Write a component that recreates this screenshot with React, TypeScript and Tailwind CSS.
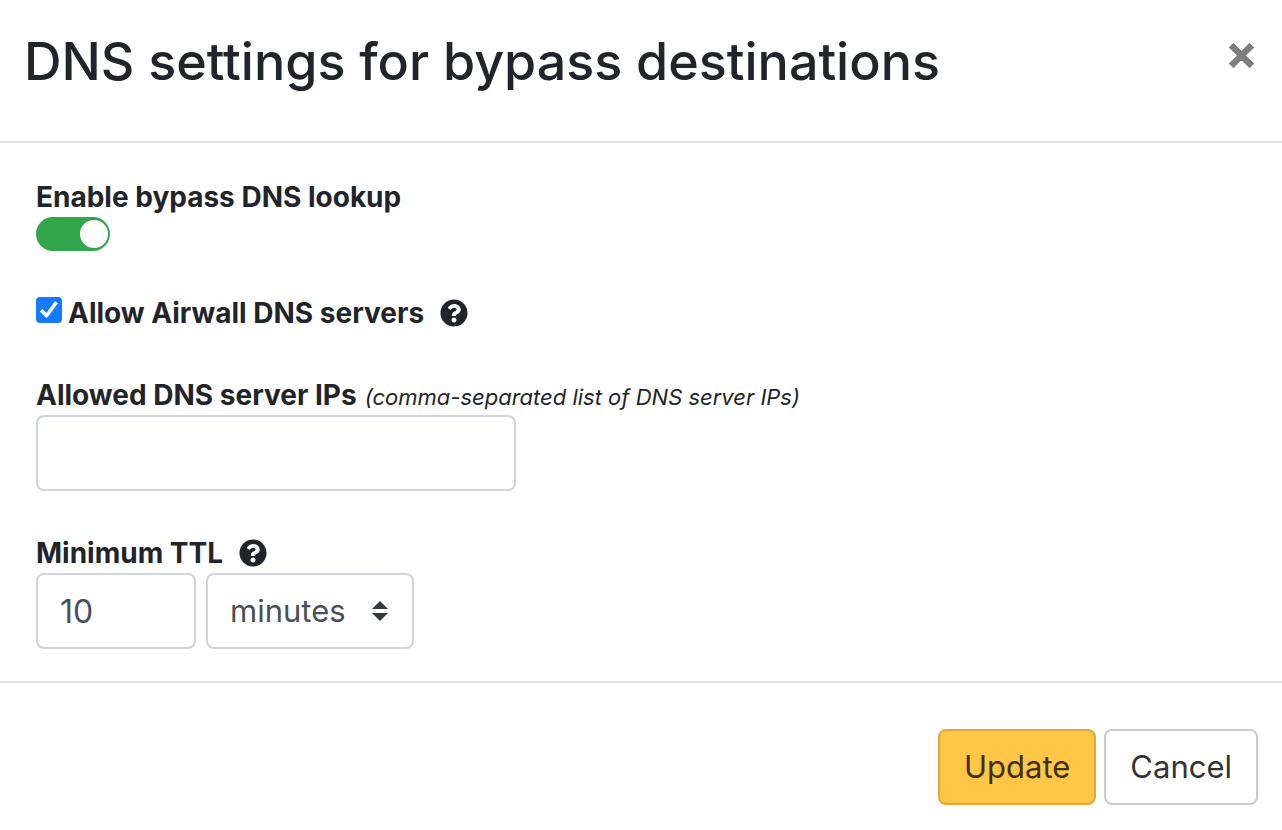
import { useState } from "react";
import { FaQuestionCircle } from "react-icons/fa";

function HelpButton({ label }: { label: string }) {
  return (
    <button type="button" aria-label={label} className="flex text-[#212529]">
      <FaQuestionCircle className="size-7" />
    </button>
  );
}

export default function App() {
  const [enabled, setEnabled] = useState(true);
  const [airwall, setAirwall] = useState(true);
  const [ips, setIps] = useState("");
  const [ttl, setTtl] = useState("10");
  const [unit, setUnit] = useState("minutes");

  return (
    <main className="min-h-screen bg-white font-['Inter',sans-serif] text-[#212529]">
      <header className="flex items-start justify-between border-b-2 border-[#dee2e6] pt-7 pr-7 pb-[45px] pl-6">
        <h1 className="text-[52px] leading-[68px] font-medium">DNS settings for bypass destinations</h1>
        <button type="button" aria-label="Close" className="mt-[15px] flex text-[#7f7f7f]">
          <svg viewBox="0 0 24 24" className="size-[25px]" fill="currentColor" stroke="currentColor" strokeWidth="1" strokeLinejoin="round" aria-hidden="true">
            <path d="M4.3 .5 L12 8.2 L19.7 .5 L23.5 4.3 L15.8 12 L23.5 19.7 L19.7 23.5 L12 15.8 L4.3 23.5 L.5 19.7 L8.2 12 L.5 4.3 Z" />
          </svg>
        </button>
      </header>

      <form onSubmit={(e) => e.preventDefault()}>
        <div className="flex flex-col items-start border-b-2 border-[#dee2e6] px-9 pt-9 pb-8">
          <label htmlFor="enable" className="pb-[2px] text-[28px] leading-[36px] font-bold">
            Enable bypass DNS lookup
          </label>
          <input
            id="enable"
            type="checkbox"
            role="switch"
            checked={enabled}
            onChange={(e) => setEnabled(e.target.checked)}
            className="h-[34px] w-[74px] appearance-none rounded-full bg-[#adb5bd] px-[2px] py-[3px] before:block before:size-7 before:rounded-full before:bg-white checked:bg-[#31a64b] checked:before:ml-auto"
          />

          <div className="mt-11 flex items-center pb-[2px]">
            <span className="mt-[2px] mr-[6px] grid size-[26px] self-start">
              <input
                id="airwall"
                type="checkbox"
                checked={airwall}
                onChange={(e) => setAirwall(e.target.checked)}
                className="peer col-start-1 row-start-1 size-[26px] appearance-none rounded border-2 border-[#767676] checked:border-[#147aff] checked:bg-[#147aff]"
              />
              <svg viewBox="0 0 26 26" className="pointer-events-none invisible col-start-1 row-start-1 size-[26px] peer-checked:visible" fill="none" stroke="white" strokeWidth="3.6" strokeLinejoin="round" aria-hidden="true">
                <path d="M5.2 13.2 L10.6 18.8 L20.4 5.2" />
              </svg>
            </span>
            <label htmlFor="airwall" className="mr-4 text-[28px] leading-[36px] font-bold">
              Allow Airwall DNS servers
            </label>
            <HelpButton label="About Airwall DNS servers" />
          </div>

          <label htmlFor="ips" className="mt-11 flex items-baseline gap-2 pb-[2px] text-[28px] leading-[36px] font-bold">
            Allowed DNS server IPs
            <em className="text-[22px] leading-[28px] font-normal">(comma-separated list of DNS server IPs)</em>
          </label>
          <input
            id="ips"
            type="text"
            value={ips}
            onChange={(e) => setIps(e.target.value)}
            className="h-[76px] w-[480px] rounded-lg border-2 border-[#ced4da] px-6 text-[32px] text-[#495057]"
          />

          <div className="mt-11 flex items-center gap-4 pb-[2px]">
            <label htmlFor="ttl" className="text-[28px] leading-[36px] font-bold">
              Minimum TTL
            </label>
            <HelpButton label="About minimum TTL" />
          </div>
          <div className="flex gap-[10px]">
            <input
              id="ttl"
              type="text"
              inputMode="numeric"
              value={ttl}
              onChange={(e) => setTtl(e.target.value)}
              className="h-[76px] w-40 rounded-lg border-2 border-[#ced4da] px-[22px] text-[32px] text-[#495057]"
            />
            <div className="grid items-center">
              <select
                aria-label="Minimum TTL unit"
                value={unit}
                onChange={(e) => setUnit(e.target.value)}
                className="col-start-1 row-start-1 h-[76px] w-52 appearance-none rounded-lg border-2 border-[#ced4da] bg-white px-[22px] text-[31px] text-[#495057]"
              >
                <option>seconds</option>
                <option>minutes</option>
                <option>hours</option>
              </select>
              <svg viewBox="0 0 4 5" className="pointer-events-none col-start-1 row-start-1 mr-[26px] h-5 w-4 justify-self-end" aria-hidden="true">
                <path fill="#343a40" d="M2 0L0 2h4zm0 5L0 3h4z" />
              </svg>
            </div>
          </div>
        </div>

        <footer className="flex justify-end gap-2 px-6 pt-[46px] pb-6">
          <button type="submit" className="h-[76px] rounded-lg border-2 border-[#dfa935] bg-[#ffc648] px-6 text-[31px] text-[#40300f]">
            Update
          </button>
          <button type="button" className="h-[76px] rounded-lg border-2 border-[#cccccc] bg-white px-6 text-[31px] text-[#333333]">
            Cancel
          </button>
        </footer>
      </form>
    </main>
  );
}
